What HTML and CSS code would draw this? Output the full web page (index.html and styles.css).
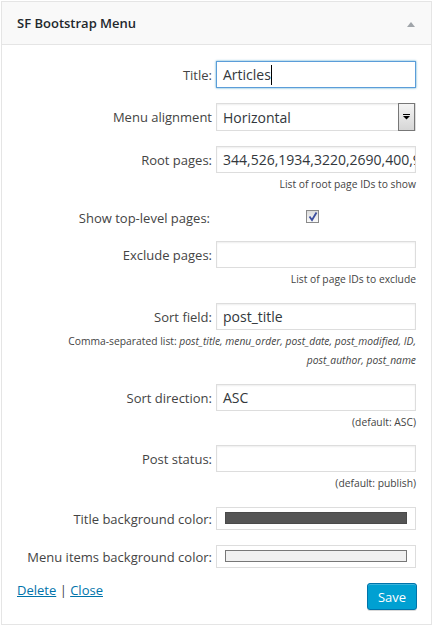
FILE: index.html
```html
<!DOCTYPE html>
<html>
<head>
<meta charset="utf-8">
<link rel="stylesheet" href="styles.css">
</head>
<body>
<div class="widget">
  <div class="widget-top">
    <h4 class="widget-title">SF Bootstrap Menu</h4>
    <span class="toggle"></span>
  </div>
  <div class="widget-inside">
    <div class="row">
      <label class="lbl">Title:</label>
      <div class="ctl field focused"><span>Articles</span><span class="caret"></span></div>
    </div>
    <div class="row">
      <label class="lbl">Menu alignment</label>
      <div class="ctl select"><span class="select-text">Horizontal</span><span class="select-btn"><svg width="9" height="6" viewBox="0 0 9 6"><rect x="1" y="0" width="7" height="1" fill="#000"/><path d="M1 2h7l-3.5 3.5z" fill="#000"/></svg></span></div>
    </div>
    <div class="row has-help">
      <label class="lbl">Root pages:</label>
      <div class="ctl field"><span class="clip">344,526,1934,3220,2690,400,987</span></div>
    </div>
    <p class="help">List of root page IDs to show</p>
    <div class="row row-check">
      <label class="lbl lbl-check">Show top-level pages:</label>
      <div class="ctl check-cell"><span class="checkbox"><svg width="11" height="11" viewBox="0 0 11 11"><path d="M2.5 5.5 L5 9 L9.5 1.5" fill="none" stroke="#3d4f9f" stroke-width="1.8"/></svg></span></div>
    </div>
    <div class="row has-help">
      <label class="lbl">Exclude pages:</label>
      <div class="ctl field"></div>
    </div>
    <p class="help">List of page IDs to exclude</p>
    <div class="row has-help">
      <label class="lbl">Sort field:</label>
      <div class="ctl field"><span>post_title</span></div>
    </div>
    <p class="help">Comma-separated list: <em>post_title, menu_order, post_date, post_modified, ID,</em><br><em>post_author, post_name</em></p>
    <div class="row has-help">
      <label class="lbl">Sort direction:</label>
      <div class="ctl field"><span>ASC</span></div>
    </div>
    <p class="help help-tight">(default: ASC)</p>
    <div class="row has-help">
      <label class="lbl">Post status:</label>
      <div class="ctl field"></div>
    </div>
    <p class="help">(default: publish)</p>
    <div class="row">
      <label class="lbl">Title background color:</label>
      <div class="ctl color"><span class="swatch swatch-dark"></span></div>
    </div>
    <div class="row">
      <label class="lbl">Menu items background color:</label>
      <div class="ctl color"><span class="swatch swatch-light"></span></div>
    </div>
    <div class="footer">
      <div class="links"><a href="#">Delete</a> | <a href="#">Close</a></div>
      <button class="save">Save</button>
    </div>
  </div>
</div>
</body>
</html>
```
FILE: styles.css
```css
html, body {
  margin: 0;
  padding: 0;
  background: #fff;
}
body {
  font-family: "Open Sans", "Liberation Sans", sans-serif;
  font-size: 13px;
  color: #444;
}
.widget {
  box-sizing: border-box;
  width: 431px;
  height: 624px;
  margin: 1px 0 0 1px;
  border: 1px solid #e5e5e5;
  background: #fff;
}
.widget-top {
  box-sizing: border-box;
  height: 43px;
  background: #f9f9f9;
  border-bottom: 1px solid #e5e5e5;
  display: flex;
  align-items: center;
  justify-content: space-between;
  padding: 0 16px 0 15px;
}
.widget-title {
  margin: 0;
  font-size: 13px;
  font-weight: 600;
  color: #23282d;
}
.toggle {
  width: 0;
  height: 0;
  border-left: 4px solid transparent;
  border-right: 4px solid transparent;
  border-bottom: 5px solid #a0a5aa;
  margin-top: 3px;
}
.widget-inside {
  padding: 16px 15px 0 15px;
}
.row {
  display: flex;
  align-items: center;
  margin-bottom: 15px;
}
.row.has-help {
  margin-bottom: 2px;
}
.lbl {
  flex: 1;
  text-align: right;
  padding-right: 4px;
  white-space: nowrap;
}
.ctl {
  box-sizing: border-box;
  width: 200px;
  flex: none;
}
.field {
  height: 27px;
  border: 1px solid #ddd;
  box-shadow: inset 0 1px 2px rgba(0, 0, 0, 0.07);
  padding: 0 6px;
  font-size: 14px;
  color: #32373c;
  display: flex;
  align-items: center;
  overflow: hidden;
  white-space: nowrap;
}
.focused {
  border-color: #5b9dd9;
  box-shadow: 0 0 2px rgba(30, 140, 190, 0.8);
}
.caret {
  width: 1px;
  height: 20px;
  background: #000;
}
.clip {
  white-space: nowrap;
}
.select {
  height: 28px;
  border: 1px solid #ddd;
  box-shadow: inset 0 1px 2px rgba(0, 0, 0, 0.07);
  display: flex;
  align-items: stretch;
  font-size: 14px;
  color: #32373c;
}
.select-text {
  flex: 1;
  display: flex;
  align-items: center;
  padding-left: 6px;
}
.select-btn {
  box-sizing: border-box;
  width: 17px;
  margin: -1px 0 -1px 0;
  border: 1px solid #777;
  background: linear-gradient(#f4f4f4, #d6d6d6);
  display: flex;
  align-items: center;
  justify-content: center;
}
.help {
  margin: 0 0 14px 0;
  text-align: right;
  font-size: 10.3px;
  line-height: 19px;
  color: #444;
}
.help em {
  font-style: italic;
}
.help-tight {
  margin-bottom: 13px;
}
.row-check {
  height: 20px;
  margin-bottom: 13px;
}
.lbl-check {
  padding-right: 6px;
}
.check-cell {
  padding-left: 90px;
  display: flex;
  align-items: center;
}
.checkbox {
  box-sizing: border-box;
  width: 13px;
  height: 13px;
  border: 1px solid #8a8a8a;
  background: linear-gradient(#dcdcdc, #fafafa);
  margin-bottom: 3px;
  display: flex;
  align-items: center;
  justify-content: center;
}
.color {
  height: 23px;
  border: 1px solid #ddd;
  padding: 4px 8px 5px 8px;
  display: flex;
}
.swatch {
  flex: 1;
  border: 1px solid #777;
}
.swatch-dark {
  background: #555;
  border-color: #4a4a4a;
}
.swatch-light {
  background: #f0f0f0;
}
.footer {
  display: flex;
  justify-content: space-between;
  align-items: flex-start;
}
.links {
  line-height: 14px;
  color: #444;
}
.links a {
  color: #0073aa;
  text-decoration: underline;
}
.save {
  box-sizing: border-box;
  height: 27px;
  width: 50px;
  margin-right: -1px;
  padding: 0;
  font-family: "Open Sans", "Liberation Sans", sans-serif;
  font-size: 13px;
  color: #fff;
  background: #00a0d2;
  border: 1px solid #0073aa;
  border-radius: 3px;
  box-shadow: inset 0 1px 0 rgba(120, 200, 230, 0.5), 0 1px 0 rgba(0, 0, 0, 0.15);
}
```
